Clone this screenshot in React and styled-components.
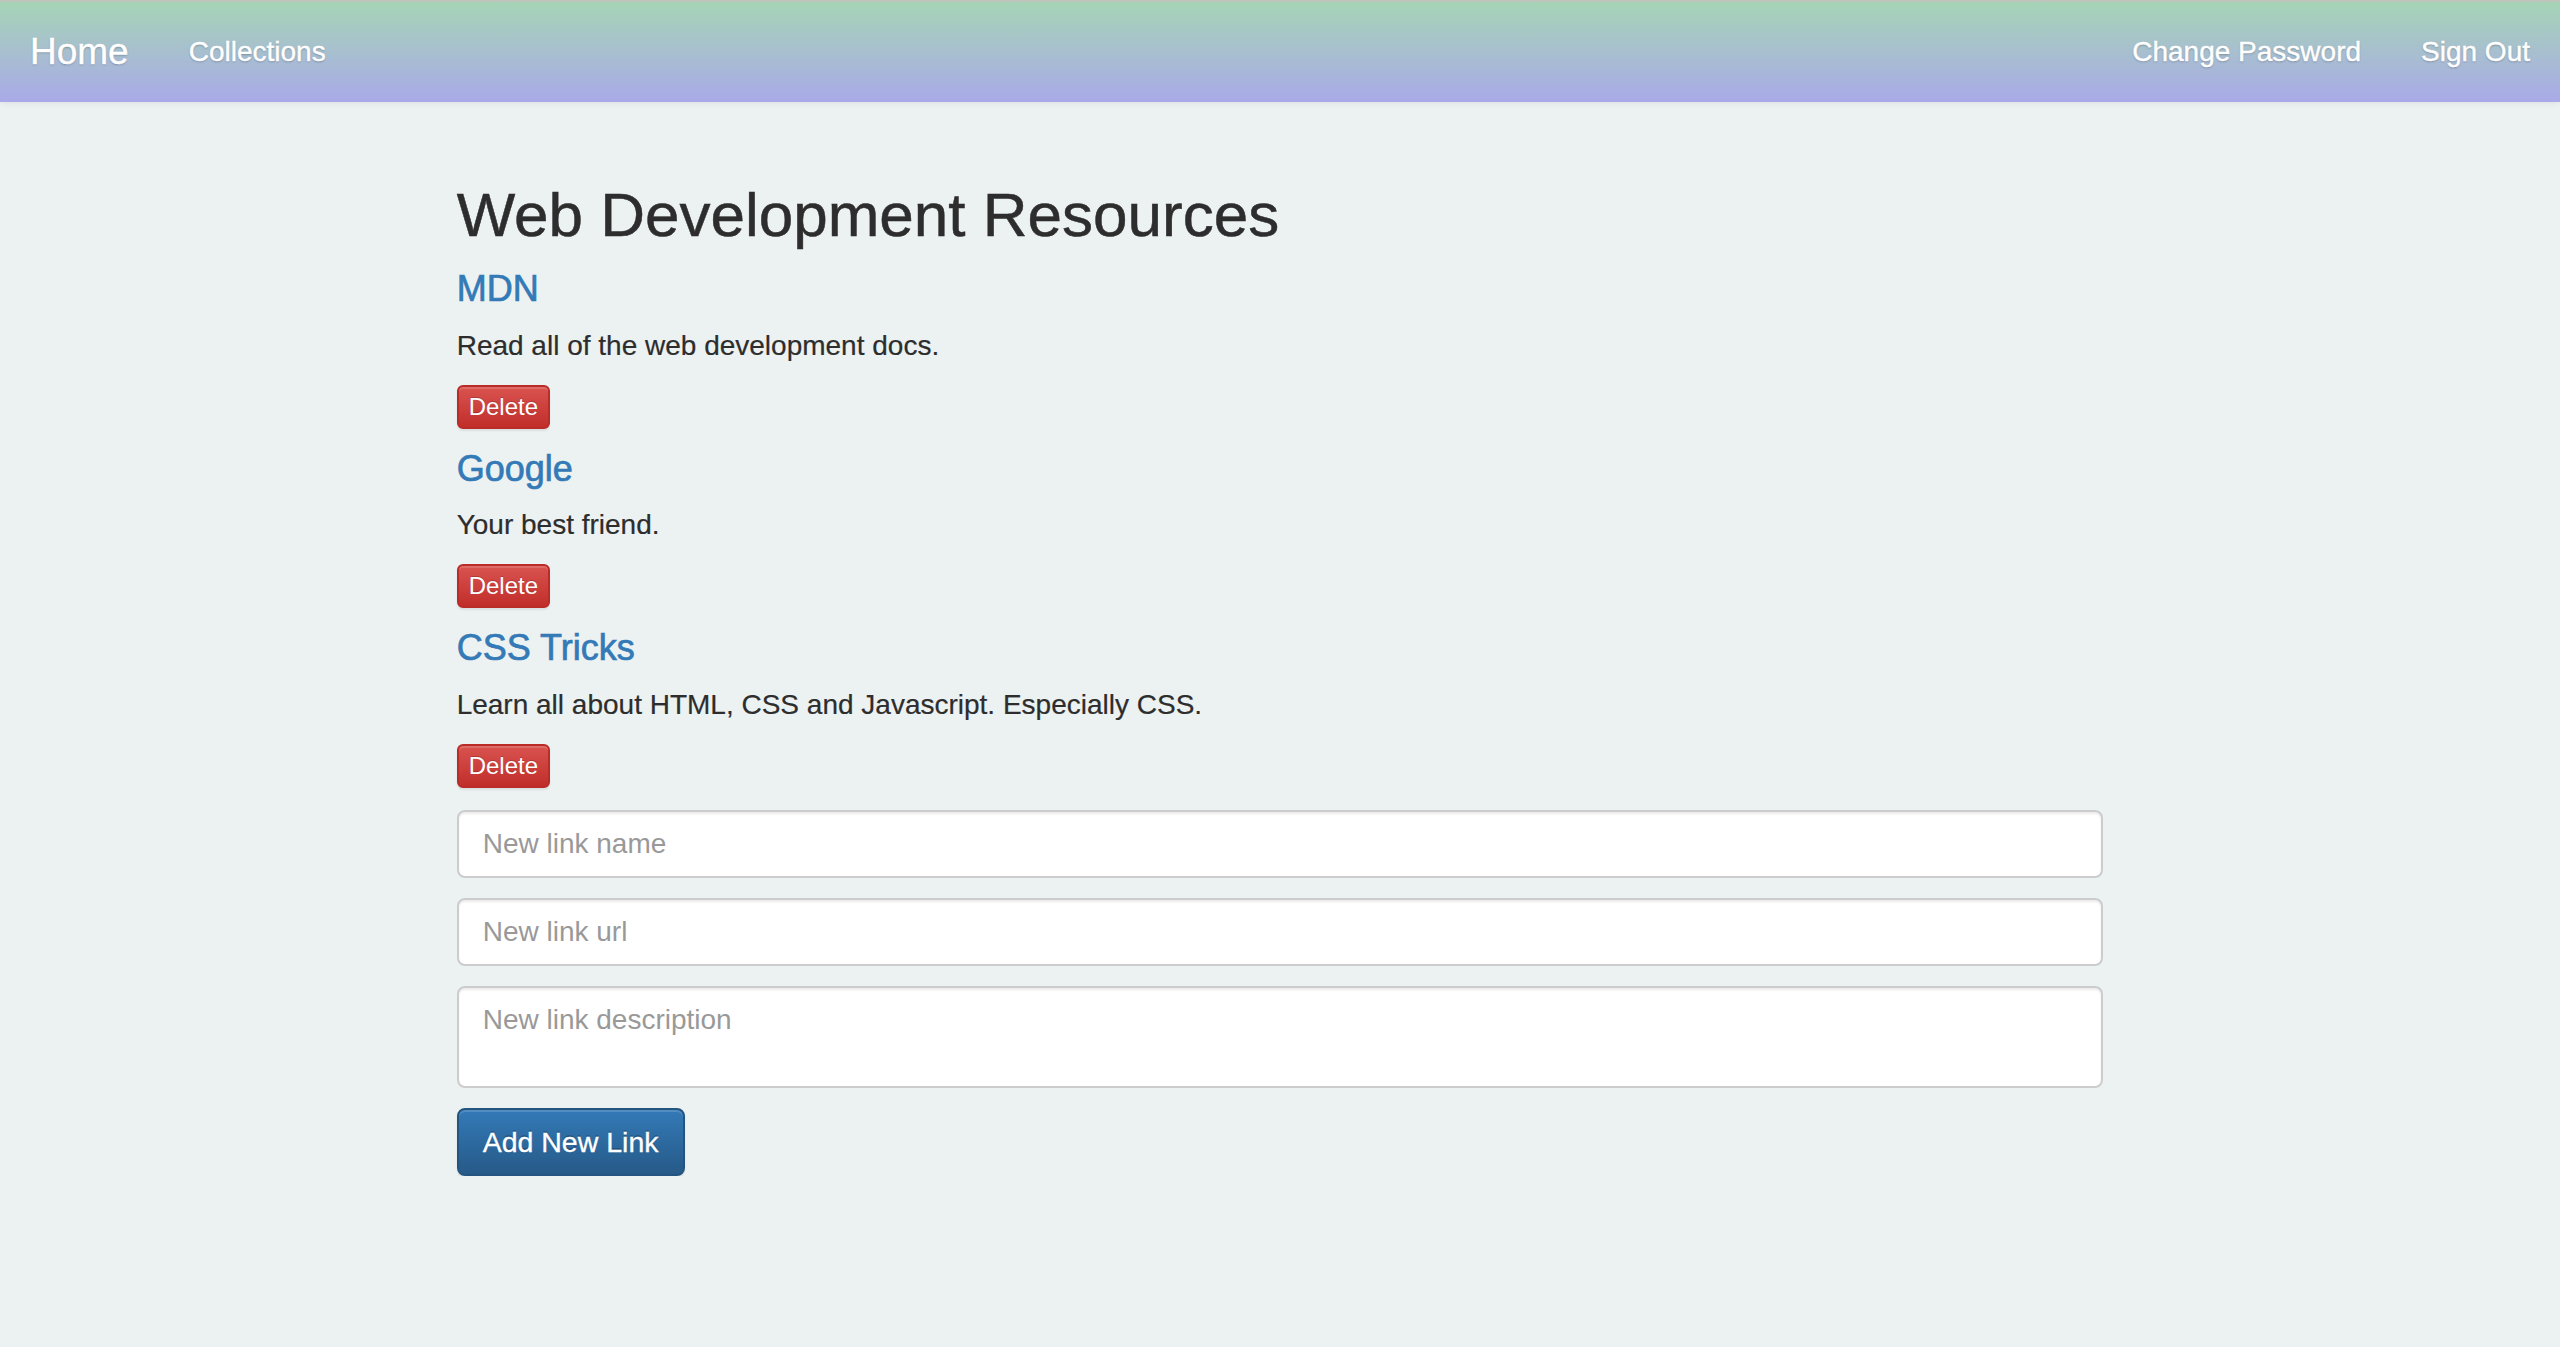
import React from "react";
import styled, { createGlobalStyle } from "styled-components";

const GlobalStyle = createGlobalStyle`
  html, body {
    margin: 0;
    padding: 0;
    background: #ecf1f1;
  }
  body {
    font-family: "Liberation Sans", Arial, Helvetica, sans-serif;
    font-size: 28px;
    line-height: 40px;
    color: #333;
  }
  * {
    box-sizing: border-box;
  }
`;

const Navbar = styled.nav`
  display: flex;
  align-items: flex-start;
  justify-content: space-between;
  height: 102px;
  border-top: 2px solid #bfc4bd;
  background-image: linear-gradient(to bottom, #a6d4b6 0%, #a9aae8 100%);
  box-shadow: 0 2px 6px rgba(0, 0, 0, 0.06);
`;

const NavGroup = styled.div`
  display: flex;
  align-items: flex-start;
`;

const NavLink = styled.a`
  display: block;
  padding: 30px 30px;
  height: 100px;
  color: #fff;
  font-size: ${(p) => (p.brand ? "37px" : "28px")};
  line-height: 40px;
  text-decoration: none;
  text-shadow: 0 1px 2px rgba(0, 0, 0, 0.25);
  -webkit-text-stroke: 0.4px #fff;
`;

const Main = styled.main`
  padding: 0 calc(16.6667% + 30px);
`;

const Title = styled.h2`
  margin: 79px 0 20px;
  font-size: 62px;
  font-weight: 400;
  line-height: 1.1;
  color: #2d2d2d;
  -webkit-text-stroke: 0.5px #2d2d2d;
`;

const LinkItem = styled.div`
  display: flex;
  flex-direction: column;
  align-items: flex-start;
`;

const LinkName = styled.h4`
  margin: 0 0 17px;
  font-size: 36px;
  font-weight: 500;
  line-height: 1.1;
  -webkit-text-stroke: 0.7px #337ab7;
  a {
    color: #337ab7;
    text-decoration: none;
  }
`;

const LinkText = styled.p`
  margin: 0 0 19px;
  font-size: 28px;
  line-height: 40px;
  color: #2d2d2d;
  -webkit-text-stroke: 0.2px #2d2d2d;
`;

const DeleteButton = styled.button`
  height: 44px;
  margin-bottom: 20px;
  padding: 0 10px;
  font-family: inherit;
  font-size: 24px;
  line-height: 36px;
  color: #fff;
  border: 2px solid #b92c28;
  border-radius: 6px;
  background-image: linear-gradient(to bottom, #d9534f 0%, #c12e2a 100%);
  text-shadow: 0 -1px 0 rgba(0, 0, 0, 0.2);
  box-shadow: inset 0 2px 0 rgba(255, 255, 255, 0.15),
    0 2px 2px rgba(0, 0, 0, 0.075);
  cursor: pointer;
`;

const Form = styled.form`
  display: flex;
  flex-direction: column;
  align-items: flex-start;
  gap: 20px;
  margin-top: 2px;
`;

const Field = styled.input`
  width: 100%;
  height: ${(p) => (p.as === "textarea" ? "102px" : "68px")};
  padding: 12px 24px;
  font-family: inherit;
  font-size: 28px;
  line-height: 40px;
  color: #555;
  background: #fff;
  border: 2px solid #ccc;
  border-radius: 8px;
  box-shadow: inset 0 2px 2px rgba(0, 0, 0, 0.075);
  resize: none;
  outline: none;
  &::placeholder {
    color: #999;
  }
`;

const SubmitButton = styled.button`
  height: 68px;
  padding: 0 24px;
  font-family: inherit;
  font-size: 28.5px;
  line-height: 40px;
  color: #fff;
  border: 2px solid #245580;
  border-radius: 8px;
  background-image: linear-gradient(to bottom, #337ab7 0%, #265a88 100%);
  text-shadow: 0 -2px 0 rgba(0, 0, 0, 0.2);
  -webkit-text-stroke: 0.3px #fff;
  box-shadow: inset 0 2px 0 rgba(255, 255, 255, 0.15),
    0 2px 2px rgba(0, 0, 0, 0.075);
  cursor: pointer;
`;

const links = [
  { name: "MDN", text: "Read all of the web development docs." },
  { name: "Google", text: "Your best friend." },
  {
    name: "CSS Tricks",
    text: "Learn all about HTML, CSS and Javascript. Especially CSS.",
  },
];

const App = () => {
  return (
    <>
      <GlobalStyle />
      <Navbar>
        <NavGroup>
          <NavLink brand href="#">
            Home
          </NavLink>
          <NavLink href="#">Collections</NavLink>
        </NavGroup>
        <NavGroup>
          <NavLink href="#">Change Password</NavLink>
          <NavLink href="#">Sign Out</NavLink>
        </NavGroup>
      </Navbar>
      <Main>
        <Title>Web Development Resources</Title>
        {links.map((link) => (
          <LinkItem key={link.name}>
            <LinkName>
              <a href="#">{link.name}</a>
            </LinkName>
            <LinkText>{link.text}</LinkText>
            <DeleteButton>Delete</DeleteButton>
          </LinkItem>
        ))}
        <Form onSubmit={(e) => e.preventDefault()}>
          <Field placeholder="New link name" />
          <Field placeholder="New link url" />
          <Field as="textarea" placeholder="New link description" />
          <SubmitButton type="submit">Add New Link</SubmitButton>
        </Form>
      </Main>
    </>
  );
};

export default App;
